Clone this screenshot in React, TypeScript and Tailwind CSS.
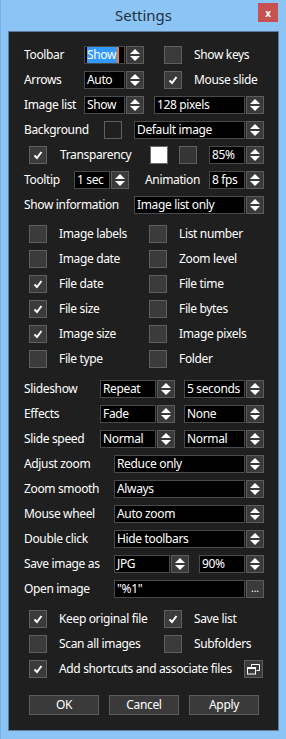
import type { ReactNode } from "react";

const Spin = ({ className = "" }: { className?: string }) => (
  <div
    className={`h-[18px] w-[18px] shrink-0 bg-[#3a3a3a] border border-[#5c5c5c] flex items-center justify-center ${className}`}
  >
    <svg width="12" height="14" viewBox="0 0 12 14">
      <polygon points="1,6 6,1 11,6" fill="#ffffff" />
      <polygon points="1,8 6,13 11,8" fill="#ffffff" />
    </svg>
  </div>
);

const Sel = ({ className = "", children }: { className?: string; children: ReactNode }) => (
  <div
    className={`h-[18px] shrink-0 bg-black border border-[#4a4a4a] text-white flex items-center pl-[2px] leading-none whitespace-nowrap overflow-hidden ${className}`}
  >
    {children}
  </div>
);

const Check = ({ on = false, className = "" }: { on?: boolean; className?: string }) => (
  <div
    className={`h-[18px] w-[18px] shrink-0 bg-[#3b3b3b] border border-[#5f5f5f] flex items-center justify-center ${className}`}
  >
    {on && (
      <svg width="10" height="10" viewBox="0 0 10 10">
        <path d="M1.5 5.5 L4 8 L8.5 2" stroke="#ffffff" strokeWidth="2" fill="none" />
      </svg>
    )}
  </div>
);

const Lbl = ({ className = "", children }: { className?: string; children: ReactNode }) => (
  <div className={`shrink-0 text-white whitespace-nowrap leading-none ${className}`}>{children}</div>
);

const Row = ({ className = "", children }: { className?: string; children: ReactNode }) => (
  <div className={`flex items-center h-[18px] ${className}`}>{children}</div>
);

const Btn = ({ className = "", children }: { className?: string; children: ReactNode }) => (
  <div
    className={`h-[20px] w-[70px] bg-[#3a3a3a] border border-[#5c5c5c] text-white flex items-center justify-center leading-none ${className}`}
  >
    {children}
  </div>
);

export default function App() {
  const checks: [string, boolean, string, boolean][] = [
    ["Image labels", false, "List number", false],
    ["Image date", false, "Zoom level", false],
    ["File date", true, "File time", false],
    ["File size", true, "File bytes", false],
    ["Image size", true, "Image pixels", false],
    ["File type", false, "Folder", false],
  ];

  return (
    <div
      className="w-[286px] h-[739px] bg-[#8bc4f5] border-l border-[#77b0e6] flex flex-col text-[12px] tracking-[-0.35px]"
      style={{ fontFamily: '"Noto Sans", "Open Sans", sans-serif' }}
    >
      {/* Title bar */}
      <div className="h-[31px] flex items-center pl-[8px] pr-[8px]">
        <div className="w-[20px]" />
        <div className="flex-1 text-center text-[15px] text-[#26313d] leading-none tracking-normal">Settings</div>
        <div className="w-[20px] h-[19px] mb-[6px] bg-[#c75050] text-white font-bold text-[10px] flex items-center justify-center leading-none">
          x
        </div>
      </div>

      {/* Body */}
      <div className="ml-[7px] w-[271px] h-[700px] bg-[#1f1f1f] border border-[#5f7c9c] pt-[14px] pl-[15px] flex flex-col gap-[7px]">
        <Row>
          <Lbl className="w-[60px]">Toolbar</Lbl>
          <Sel className="w-[41px]">
            <span className="bg-[#3399ff] h-[16px] flex items-center pr-[1px]">Show</span>
            <span className="w-[2px] h-[16px] bg-[#e8782a]" />
          </Sel>
          <Spin className="ml-[1px]" />
          <Check className="ml-[20px]" />
          <Lbl className="ml-[12px]">Show keys</Lbl>
        </Row>
        <Row>
          <Lbl className="w-[60px]">Arrows</Lbl>
          <Sel className="w-[41px]">Auto</Sel>
          <Spin className="ml-[1px]" />
          <Check on className="ml-[20px]" />
          <Lbl className="ml-[12px]">Mouse slide</Lbl>
        </Row>
        <Row>
          <Lbl className="w-[60px]">Image list</Lbl>
          <Sel className="w-[41px]">Show</Sel>
          <Spin className="ml-[1px]" />
          <Sel className="ml-[10px] w-[91px]">128 pixels</Sel>
          <Spin className="ml-[1px]" />
        </Row>
        <Row>
          <Lbl className="w-[80px]">Background</Lbl>
          <div className="h-[18px] w-[18px] shrink-0 bg-[#202020] border border-[#5f5f5f]" />
          <Sel className="ml-[12px] w-[111px]">Default image</Sel>
          <Spin className="ml-[1px]" />
        </Row>
        <Row>
          <Check on className="ml-[5px]" />
          <Lbl className="ml-[13px] w-[90px]">Transparency</Lbl>
          <div className="h-[18px] w-[18px] shrink-0 bg-white border border-[#6a6a6a]" />
          <div className="ml-[11px] h-[18px] w-[18px] shrink-0 bg-[#353538] border border-[#5f5f5f]" />
          <Sel className="ml-[12px] w-[36px]">85%</Sel>
          <Spin className="ml-[1px]" />
        </Row>
        <Row>
          <Lbl className="w-[50px]">Tooltip</Lbl>
          <Sel className="w-[36px]">1 sec</Sel>
          <Spin className="ml-[1px]" />
          <Lbl className="ml-[16px] w-[64px]">Animation</Lbl>
          <Sel className="w-[36px]">8 fps</Sel>
          <Spin className="ml-[1px]" />
        </Row>
        <Row>
          <Lbl className="w-[110px]">Show information</Lbl>
          <Sel className="w-[111px]">Image list only</Sel>
          <Spin className="ml-[1px]" />
        </Row>

        <div className="mt-[4px] flex flex-col gap-[7px]">
          {checks.map(([a, ac, b, bc]) => (
            <Row key={a}>
              <Check on={ac} className="ml-[5px]" />
              <Lbl className="ml-[12px] w-[90px]">{a}</Lbl>
              <Check on={bc} />
              <Lbl className="ml-[12px]">{b}</Lbl>
            </Row>
          ))}
        </div>

        <div className="mt-[5px] flex flex-col gap-[7px]">
          {[
            ["Slideshow", "Repeat", "5 seconds"],
            ["Effects", "Fade", "None"],
            ["Slide speed", "Normal", "Normal"],
          ].map(([l, a, b]) => (
            <Row key={l}>
              <Lbl className="w-[76px]">{l}</Lbl>
              <Sel className="w-[56px]">{a}</Sel>
              <Spin className="ml-[1px]" />
              <Sel className="ml-[9px] w-[61px]">{b}</Sel>
              <Spin className="ml-[1px]" />
            </Row>
          ))}
          {[
            ["Adjust zoom", "Reduce only"],
            ["Zoom smooth", "Always"],
            ["Mouse wheel", "Auto zoom"],
            ["Double click", "Hide toolbars"],
          ].map(([l, v]) => (
            <Row key={l}>
              <Lbl className="w-[90px]">{l}</Lbl>
              <Sel className="w-[131px]">{v}</Sel>
              <Spin className="ml-[1px]" />
            </Row>
          ))}
          <Row>
            <Lbl className="w-[90px]">Save image as</Lbl>
            <Sel className="w-[56px]">JPG</Sel>
            <Spin className="ml-[1px]" />
            <Sel className="ml-[10px] w-[46px]">90%</Sel>
            <Spin className="ml-[1px]" />
          </Row>
          <Row>
            <Lbl className="w-[90px]">Open image</Lbl>
            <Sel className="w-[131px]">"%1"</Sel>
            <div className="ml-[1px] h-[18px] w-[18px] shrink-0 bg-[#3a3a3a] border border-[#5c5c5c] text-white flex items-center justify-center leading-none text-[10px] pb-[3px] tracking-normal">
              ...
            </div>
          </Row>
        </div>

        <div className="mt-[5px] flex flex-col gap-[7px]">
          <Row>
            <Check on className="ml-[5px]" />
            <Lbl className="ml-[12px] w-[105px]">Keep original file</Lbl>
            <Check on />
            <Lbl className="ml-[12px]">Save list</Lbl>
          </Row>
          <Row>
            <Check className="ml-[5px]" />
            <Lbl className="ml-[12px] w-[105px]">Scan all images</Lbl>
            <Check />
            <Lbl className="ml-[12px]">Subfolders</Lbl>
          </Row>
          <Row>
            <Check on className="ml-[5px]" />
            <Lbl className="ml-[12px] w-[185px]">Add shortcuts and associate files</Lbl>
            <div className="h-[18px] w-[19px] shrink-0 bg-[#3a3a3a] border border-[#5c5c5c] flex items-center justify-center">
              <svg width="13" height="11" viewBox="0 0 13 11">
                <path d="M4.5 2.5 V0.5 H12.5 V6.5 H9.5" stroke="#ffffff" strokeWidth="1" fill="none" />
                <rect x="0.5" y="3.5" width="8" height="6.5" stroke="#ffffff" strokeWidth="1" fill="none" />
                <line x1="0.5" y1="4.5" x2="8.5" y2="4.5" stroke="#ffffff" strokeWidth="1" />
              </svg>
            </div>
          </Row>
        </div>

        <div className="mt-[10px] flex items-center">
          <Btn className="ml-[5px]">OK</Btn>
          <Btn className="ml-[10px]">Cancel</Btn>
          <Btn className="ml-[10px]">Apply</Btn>
        </div>
      </div>
    </div>
  );
}
